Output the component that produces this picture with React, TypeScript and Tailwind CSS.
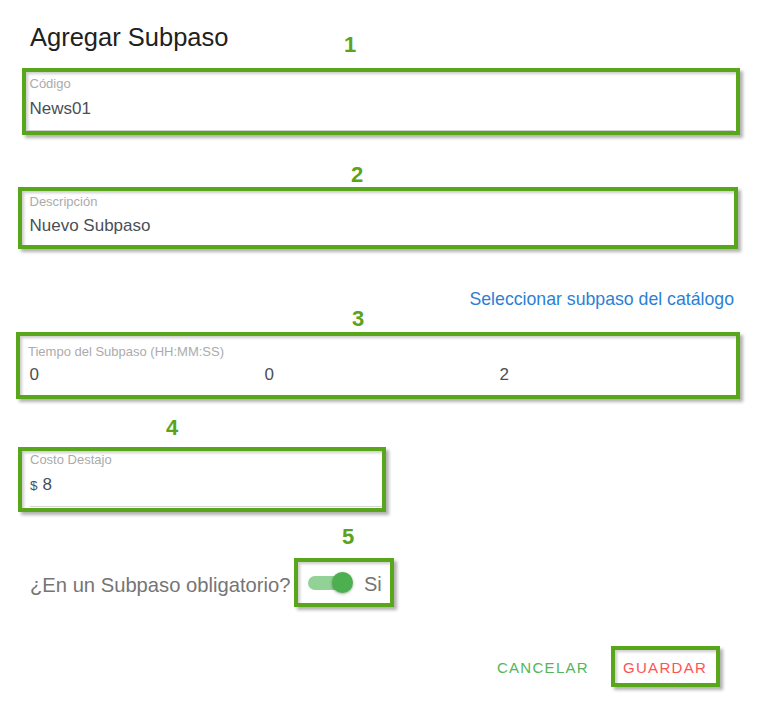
import React, { useState } from 'react';

// annotation frame drawn round each numbered field
const FRAME =
  'border-4 border-[#58a61a] shadow-[3px_3px_3px_rgba(0,0,0,0.3),inset_2px_2px_3px_rgba(0,0,0,0.2)]';

const Num: React.FC<{ n: string }> = ({ n }) => (
  <div className="text-[22px] leading-[22px] font-bold text-[#5aa31c]">{n}</div>
);

const App: React.FC = () => {
  const [codigo] = useState('News01');
  const [descripcion] = useState('Nuevo Subpaso');
  const [tiempo] = useState(['0', '0', '2']);
  const [costo] = useState('8');
  const [obligatorio, setObligatorio] = useState(true);

  return (
    <div className="w-[764px] h-[713px] bg-white overflow-hidden font-['Liberation_Sans',Arial,sans-serif]">
      {/* title */}
      <div className="flex items-start h-[68px]">
        <h2 className="w-[344px] pl-[30px] mt-[22px] text-[25.5px] leading-[30px] font-normal text-[#212121]">
          Agregar Subpaso
        </h2>
        <div className="mt-[34px]">
          <Num n="1" />
        </div>
      </div>

      {/* 1 - Código */}
      <div className={`ml-[22px] w-[718px] h-[67px] flex flex-col ${FRAME}`}>
        <div className="pl-[3.5px] pt-[3.5px] text-[13px] leading-[16px] text-[#ababab]">Código</div>
        <div className="pl-[3.5px] mt-[7.5px] text-[17px] leading-[20px] text-[#4a4f56]">{codigo}</div>
        <div className="mt-auto mr-[2px] h-px bg-[#cfcfcf]" />
      </div>

      <div className="h-[52px] pt-[29px] pl-[351px]">
        <Num n="2" />
      </div>

      {/* 2 - Descripción */}
      <div className={`ml-[18px] w-[720px] h-[62px] ${FRAME}`}>
        <div className="pl-[7.5px] pt-[2.5px] text-[13px] leading-[16px] text-[#ababab]">Descripción</div>
        <div className="pl-[7.5px] mt-[6.5px] text-[17px] leading-[20px] text-[#4a4f56]">{descripcion}</div>
      </div>

      <div className="h-[83px] pt-[41px]">
        <div className="text-right pr-[30px] text-[17.7px] leading-[18px] text-[#2b7fd6] cursor-pointer">
          Seleccionar subpaso del catálogo
        </div>
        <div className="pl-[352px]">
          <Num n="3" />
        </div>
      </div>

      {/* 3 - Tiempo */}
      <div className={`ml-[16px] w-[724px] h-[67px] ${FRAME}`}>
        <div className="pl-[8px] pt-[7.5px] text-[13px] leading-[16px] text-[#ababab]">
          Tiempo del Subpaso (HH:MM:SS)
        </div>
        <div className="grid grid-cols-3 w-[705px] ml-[9.5px] mt-[5px] text-[17px] leading-[20px] text-[#4a4f56]">
          {tiempo.map((t, i) => (
            <span key={i}>{t}</span>
          ))}
        </div>
      </div>

      <div className="h-[48px] pt-[18px] pl-[166px]">
        <Num n="4" />
      </div>

      {/* 4 - Costo */}
      <div className={`ml-[18px] w-[368px] h-[65px] ${FRAME}`}>
        <div className="pl-[8px] pt-[1px] text-[13px] leading-[16px] text-[#ababab]">Costo Destajo</div>
        <div className="flex items-baseline pl-[8px] mt-[7px] h-[20px] leading-[20px] text-[#4a4f56]">
          <span className="text-[13.5px]">$</span>
          <span className="ml-[5px] text-[17px]">{costo}</span>
        </div>
        <div className="ml-[8px] mt-[11px] h-px bg-[#d6d6d6]" />
      </div>

      <div className="h-[46px] pt-[14px] pl-[342px]">
        <Num n="5" />
      </div>

      {/* 5 - obligatorio */}
      <div className="flex items-start h-[49px] pl-[30px]">
        <span className="block w-[264px] mt-[15px] text-[20.2px] leading-[24px] text-[#757575] whitespace-nowrap">
          ¿En un Subpaso obligatorio?
        </span>
        <div className={`w-[100px] h-[49px] flex items-center pl-[10px] ${FRAME}`}>
          <button
            onClick={() => setObligatorio(!obligatorio)}
            className="relative w-[38px] h-[14px] rounded-full bg-[#92d296]"
          >
            <span
              className={`absolute top-[-3.5px] w-[21px] h-[21px] rounded-full bg-[#4caf50] shadow-[0_1px_3px_rgba(0,0,0,0.35)] ${
                obligatorio ? 'left-[24px]' : 'left-[-4px]'
              }`}
            />
          </button>
          <span className="ml-[18px] pt-[3px] text-[20px] leading-[24px] text-[#757575]">
            {obligatorio ? 'Si' : 'No'}
          </span>
        </div>
      </div>

      <div className="h-[39px]" />

      {/* actions */}
      <div className="flex justify-end items-start h-[41px] pr-[44px]">
        <button className="mt-[13px] text-[15px] leading-[18px] tracking-[1.3px] text-[#55b55a]">CANCELAR</button>
        <div className={`ml-[22px] w-[109px] h-[41px] pl-[8px] pt-[9px] ${FRAME}`}>
          <button className="block text-[15px] leading-[18px] tracking-[1.3px] text-[#ff5252]">GUARDAR</button>
        </div>
      </div>
    </div>
  );
};

export default App;
